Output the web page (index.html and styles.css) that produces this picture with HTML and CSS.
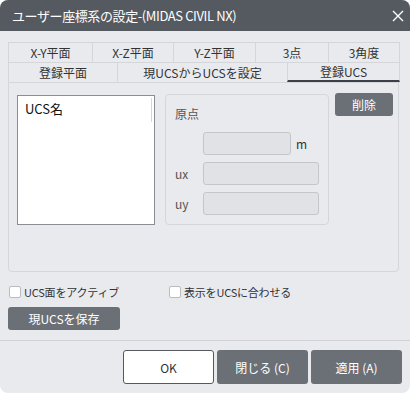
FILE: index.html
```html
<!DOCTYPE html>
<html lang="ja">
<head>
    <meta charset="UTF-8">
    <title>ユーザー座標系の設定</title>
    <link rel="stylesheet" href="styles.css">
</head>
<body>
    <div class="window">
        <div class="titlebar">
            <span class="title">ユーザー座標系の設定-(MIDAS CIVIL NX)</span>
            <svg class="close" width="12" height="12" viewBox="0 0 12 12">
                <path d="M1 1 L11 11 M11 1 L1 11" stroke="#fff" stroke-width="1.4"/>
            </svg>
        </div>
        <div class="content">
            <div class="tabs row1">
                <div class="tab">X-Y平面</div>
                <div class="tab">X-Z平面</div>
                <div class="tab">Y-Z平面</div>
                <div class="tab">3点</div>
                <div class="tab">3角度</div>
            </div>
            <div class="tabs row2">
                <div class="tab">登録平面</div>
                <div class="tab">現UCSからUCSを設定</div>
                <div class="tab active">登録UCS</div>
            </div>
            <div class="panel">
                <div class="list">
                    <div class="list-item">UCS名</div>
                    <div class="scroll"></div>
                </div>
                <div class="group">
                    <div class="group-title">原点</div>
                    <div class="field">
                        <span class="lbl"></span>
                        <div class="input short"></div>
                        <span class="unit">m</span>
                    </div>
                    <div class="field">
                        <span class="lbl">ux</span>
                        <div class="input"></div>
                    </div>
                    <div class="field">
                        <span class="lbl">uy</span>
                        <div class="input"></div>
                    </div>
                </div>
                <div class="side">
                    <button class="btn small">削除</button>
                </div>
            </div>
            <div class="checks">
                <label class="check"><span class="box"></span>UCS面をアクティブ</label>
                <label class="check second"><span class="box"></span>表示をUCSに合わせる</label>
            </div>
            <button class="btn save">現UCSを保存</button>
        </div>
        <div class="footer">
            <button class="btn big ok">OK</button>
            <button class="btn big">閉じる (C)</button>
            <button class="btn big">適用 (A)</button>
        </div>
    </div>
</body>
</html>
```

FILE: styles.css
```css
body {
    margin: 0;
    background: #ffffff;
    font-family: "Noto Sans CJK JP", "Noto Sans", sans-serif;
    font-size: 12px;
    color: #222;
}
.window {
    width: 410px;
    height: 393px;
    background: #e9eaee;
    border-radius: 8px;
    overflow: hidden;
    display: flex;
    flex-direction: column;
}
.titlebar {
    height: 31px;
    flex: none;
    background: #555a61;
    color: #fff;
    display: flex;
    align-items: center;
    padding: 0 6px 0 12px;
    font-size: 13px;
    letter-spacing: -0.4px;
}
.title {
    flex: 1;
}
.content {
    padding: 11px 9px 0 8px;
}
.tabs {
    display: grid;
    height: 20px;
}
.row1 {
    grid-template-columns: 84px 81px 82px 73px 72px;
    width: 392px;
}
.row2 {
    grid-template-columns: 109px 170px 113px;
    width: 392px;
}
.tab {
    border: 1px solid #d4d6da;
    border-right: none;
    border-bottom: none;
    display: flex;
    align-items: center;
    justify-content: center;
    color: #333;
    font-size: 12px;
    line-height: 1;
}
.tab:last-child {
    border-right: 1px solid #d4d6da;
}
.tab.active {
    border-bottom: 2px solid #3d4147;
}
.panel {
    width: 391px;
    height: 190px;
    border: 1px solid #d4d6da;
    border-radius: 0 0 4px 4px;
    display: flex;
    box-sizing: border-box;
    padding: 12px 0 0 8px;
}
.list {
    width: 138px;
    height: 130px;
    box-sizing: border-box;
    background: #fff;
    border: 1px solid #8a8d93;
    position: relative;
    padding: 3px 7px;
}
.list-item {
    font-size: 13px;
    color: #111;
}
.scroll {
    position: absolute;
    top: 2px;
    right: 2px;
    width: 1px;
    height: 24px;
    background: #d4d6da;
}
.group {
    margin-left: 10px;
    margin-top: -1px;
    width: 164px;
    height: 131px;
    box-sizing: border-box;
    border: 1px solid #d4d6da;
    border-radius: 4px;
    padding: 10px 9px 0 9px;
}
.group-title {
    color: #555;
    font-size: 12px;
    height: 27px;
}
.field {
    display: flex;
    align-items: center;
    height: 23px;
    margin-bottom: 7px;
}
.lbl {
    width: 28px;
    color: #555;
    font-size: 12px;
}
.input {
    width: 116px;
    height: 23px;
    box-sizing: border-box;
    background: #e0e2e5;
    border: 1px solid #c4c6ca;
    border-radius: 3px;
}
.input.short {
    width: 88px;
}
.unit {
    margin-left: 5px;
    font-size: 12px;
    color: #333;
}
.side {
    margin-left: 6px;
    margin-top: -2px;
}
.btn {
    font-family: inherit;
    background: #6b7077;
    color: #fff;
    border: none;
    border-radius: 3px;
    font-size: 12px;
    padding: 0;
    cursor: pointer;
}
.btn.small {
    width: 58px;
    height: 23px;
}
.checks {
    display: flex;
    align-items: center;
    margin-top: 13px;
    height: 14px;
}
.check {
    display: flex;
    align-items: center;
    font-size: 11px;
    letter-spacing: -0.2px;
    color: #333;
    width: 160px;
    margin-left: 1px;
}
.check.second {
    margin-left: 0;
}
.box {
    width: 10px;
    height: 10px;
    background: #fff;
    border: 1px solid #b9bbbf;
    border-radius: 2px;
    margin-right: 3px;
}
.btn.save {
    margin-top: 8px;
    width: 112px;
    height: 23px;
}
.footer {
    margin-top: 10px;
    border-top: 1px solid #cfd1d5;
    display: flex;
    justify-content: flex-end;
    gap: 3px;
    padding: 9px 8px 0 0;
}
.btn.big {
    width: 91px;
    height: 34px;
    font-size: 12px;
}
.btn.ok {
    background: #fff;
    color: #333;
    border: 1px solid #55595f;
    box-sizing: border-box;
}
```
